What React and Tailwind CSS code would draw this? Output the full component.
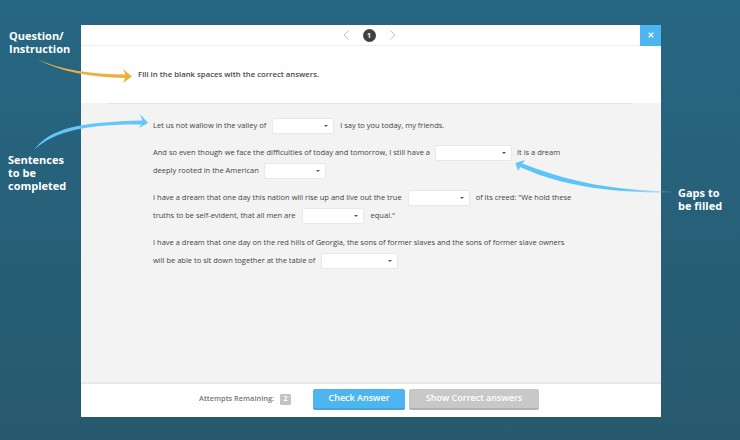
import { X } from 'lucide-react'

// blank dropdown inside a sentence
const Gap = ({ width = 'w-[62px]', className = '' }) => (
  <div className={`flex h-4 items-center justify-end rounded-[2px] border border-[#e8e8e8] bg-white pr-[5px] ${width} ${className}`}>
    <div className="h-0 w-0 border-x-[2px] border-t-[2px] border-x-transparent border-t-[#555]" />
  </div>
)

const Line = ({ children }) => (
  <div className="flex h-[18px] items-center whitespace-pre">{children}</div>
)

const Arrows = () => (
  <svg className="pointer-events-none absolute top-0 left-0" width="740" height="440" viewBox="0 0 740 440">
    <defs>
      <linearGradient id="gapTail" gradientUnits="userSpaceOnUse" x1="620" y1="0" x2="672" y2="0">
        <stop offset="0" stopColor="#5cc4f8" />
        <stop offset="0.6" stopColor="#5cc4f8" stopOpacity="0.6" />
        <stop offset="1" stopColor="#5cc4f8" stopOpacity="0.15" />
      </linearGradient>
    </defs>
    <path d="M37 59C60 70 90 74 126 74.5L126 78C90 77 60 72 37 59Z" fill="#ecae3c" />
    <path d="M123 69L132 76.5L123 83L126 76Z" fill="#ecae3c" />
    <path d="M34 150C50 128 80 122 143 120.5L143 124.5C90 124 55 130 34 150Z" fill="#62c6f8" />
    <path d="M140 114L148 123L139 128L143 122Z" fill="#62c6f8" />
    <path d="M521 163C560 178 600 190 672 191.5L672 192.5C600 193 555 183 520 167Z" fill="url(#gapTail)" />
    <path d="M525 160L515.5 163L518 171L521.5 165Z" fill="#62c6f8" />
  </svg>
)

export default function App() {
  return (
    <div className="relative h-[440px] w-[740px] overflow-hidden bg-gradient-to-b from-[#266783] to-[#27596e] pt-[25px] pl-[81px] font-['Open_Sans',sans-serif]">
      <div className="flex h-[392px] w-[580px] flex-col bg-white">
        <div className="flex h-[21px] shrink-0 items-center border-b border-[#eeeeee]">
          <div className="flex flex-1 items-center justify-center gap-[14px] pr-[4px] pl-[21px]">
            <svg width="6" height="10" viewBox="0 0 6 10" fill="none" stroke="#c4c4c4" strokeWidth="1">
              <path d="M5.5 0.5L1 5L5.5 9.5" />
            </svg>
            <div className="flex h-[13px] w-[13px] items-center justify-center rounded-full bg-[#404040] text-[7px] leading-none font-bold text-white">
              1
            </div>
            <svg width="6" height="10" viewBox="0 0 6 10" fill="none" stroke="#c4c4c4" strokeWidth="1">
              <path d="M0.5 0.5L5 5L0.5 9.5" />
            </svg>
          </div>
          <div className="flex h-[21px] w-[21px] items-center justify-center bg-[#4db5ef]">
            <X size={8} strokeWidth={3.5} color="#ffffff" />
          </div>
        </div>

        <div className="flex h-[57px] shrink-0 items-center pt-[1px] pl-[57px] text-[7.75px] font-semibold text-[#4a4a4a]">
          Fill in the blank spaces with the correct answers.
        </div>

        <div className="flex flex-1 flex-col bg-[#f3f3f3]">
          <div className="ml-[27px] h-px w-[524px] bg-[#e6e6e6]" />
          <div className="flex flex-col gap-[9px] pt-[13px] pl-[72px] text-[7.5px] text-[#444444]">
            <div>
              <Line>
                Let us not wallow in the valley of
                <Gap className="mr-[6px] ml-[6px]" />
                I say to you today, my friends.
              </Line>
            </div>
            <div>
              <Line>
                And so even though we face the difficulties of today and tomorrow, I still have a
                <Gap width="w-[77px]" className="mr-[5px] ml-[5px]" />
                It is a dream
              </Line>
              <Line>
                deeply rooted in the American
                <Gap className="ml-[5px]" />
              </Line>
            </div>
            <div>
              <Line>
                I have a dream that one day this nation will rise up and live out the true
                <Gap className="mr-[6px] ml-[6px]" />
                of its creed: "We hold these
              </Line>
              <Line>
                truths to be self-evident, that all men are
                <Gap className="mr-[7px] ml-[6px]" />
                equal."
              </Line>
            </div>
            <div>
              <Line>
                I have a dream that one day on the red hills of Georgia, the sons of former slaves and the sons of former slave owners
              </Line>
              <Line>
                will be able to sit down together at the table of
                <Gap width="w-[77px]" className="ml-[6px]" />
              </Line>
            </div>
          </div>
        </div>

        <div className="flex h-[35px] shrink-0 items-center border-t-2 border-[#e8e8e8] pb-[3px] pl-[118px]">
          <span className="w-[75px] whitespace-nowrap text-[7.4px] font-semibold text-[#777777]">Attempts Remaining:</span>
          <div className="ml-[6px] flex h-[11px] w-[11px] items-center justify-center rounded-[1px] bg-[#c4c4c4] text-[7px] font-bold text-white">
            2
          </div>
          <button className="ml-[22px] h-[21px] w-[92px] rounded-[2px] border-b-2 border-[#45a4da] bg-[#4db5ef] text-[9px] font-semibold text-white">
            Check Answer
          </button>
          <button className="ml-[4px] h-[21px] w-[130px] rounded-[2px] border-b-2 border-[#b0b0b0] bg-[#c8c8c8] text-[9px] font-semibold text-white">
            Show Correct answers
          </button>
        </div>
      </div>

      {/* callouts over the page */}
      <div className="absolute top-[29px] left-[9px] text-[11px] leading-[13px] font-bold text-white">
        Question/
        <br />
        Instruction
      </div>
      <div className="absolute top-[153px] left-[8px] text-[11px] leading-[13px] font-bold text-white">
        Sentences
        <br />
        to be
        <br />
        completed
      </div>
      <div className="absolute top-[186px] left-[678px] text-[11px] leading-[13px] font-bold text-white">
        Gaps to
        <br />
        be filled
      </div>
      <Arrows />
    </div>
  )
}
